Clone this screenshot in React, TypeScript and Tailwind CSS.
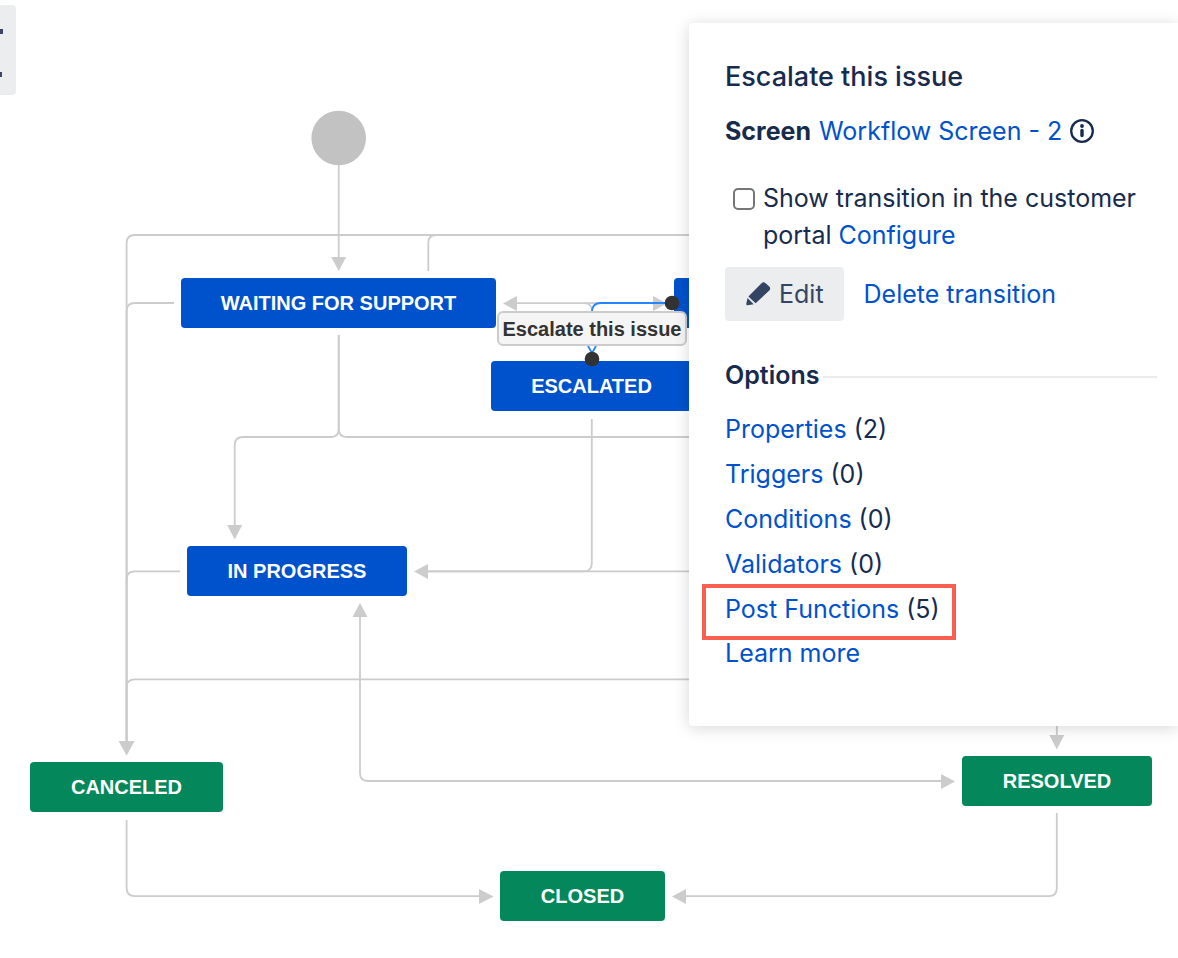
import { useState } from 'react';

type Node = { label: string; box: string };

const nodes: Node[] = [
  { label: 'WAITING FOR SUPPORT', box: 'left-[181px] top-[278px] w-[315px] bg-[#0052cc]' },
  { label: 'ESCALATED', box: 'left-[491px] top-[361px] w-[201px] bg-[#0052cc]' },
  { label: '', box: 'left-[674px] top-[278px] w-[300px] bg-[#0052cc]' },
  { label: 'IN PROGRESS', box: 'left-[187px] top-[546px] w-[220px] bg-[#0052cc]' },
  { label: 'CANCELED', box: 'left-[30px] top-[762px] w-[193px] bg-[#04875a]' },
  { label: 'RESOLVED', box: 'left-[962px] top-[756px] w-[190px] bg-[#04875a]' },
  { label: 'CLOSED', box: 'left-[500px] top-[871px] w-[165px] bg-[#04875a]' },
];

const edges = [
  'M338.700 165V258',
  'M720 235H135Q126.600 235 126.600 243V742',
  'M428.300 271V243Q428.300 235 436 235H720',
  'M174 303H135Q126.600 303 126.600 311V742',
  'M180 571.300H135Q126.600 571.300 126.600 579V742',
  'M720 679.300H135Q126.600 679.300 126.600 687V742',
  'M338.700 335V429Q338.700 437 331 437H243Q234.700 437 234.700 445V527',
  'M338.700 335V429Q338.700 437 347 437H720',
  'M591.800 419V563Q591.800 571.300 584 571.300H428',
  'M720 571.300H428',
  'M516 303.200H654',
  'M584 303.200Q592 303 592 311',
  'M360 616V773Q360 781 368 781H942',
  'M1056.800 700V736',
  'M126.600 820V888Q126.600 896.200 135 896.200H480',
  'M1056.800 813V888Q1056.800 896.200 1049 896.200H686',
];

const arrows = [
  'M331.200 257H346.200L338.700 271Z',
  'M227.200 525H242.200L234.700 539.500Z',
  'M118.600 741H134.600L126.600 755.800Z',
  'M352.500 617H367.500L360 603Z',
  'M428 564V579L414 571.500Z',
  'M517 296V311L503 303.500Z',
  'M653 296V311L667 303.500Z',
  'M941 774V789L955 781.500Z',
  'M1049.300 735H1064.300L1056.800 749.500Z',
  'M479 889V904L493.500 896.500Z',
  'M686 889V904L672 896.500Z',
];

const options = [
  { label: 'Properties', count: 2 },
  { label: 'Triggers', count: 0 },
  { label: 'Conditions', count: 0 },
  { label: 'Validators', count: 0 },
  { label: 'Post Functions', count: 5, marked: true },
];

function Diagram() {
  return (
    <div className="absolute inset-0 overflow-hidden font-['Liberation_Sans',Arial,sans-serif] text-xl font-bold">
      <svg className="absolute left-0 top-0" width="1178" height="958" aria-hidden="true">
        <circle cx="338.700" cy="138" r="27.300" fill="#c2c2c2" />
        <g fill="none" stroke="#cccccc" strokeWidth="1.800">
          {edges.map((d) => (
            <path key={d} d={d} />
          ))}
        </g>
        <g fill="#cccccc">
          {arrows.map((d) => (
            <path key={d} d={d} />
          ))}
        </g>
      </svg>
      {nodes.map((node) => (
        <div
          key={node.box}
          className={`absolute flex h-[50px] items-center justify-center rounded text-white ${node.box}`}
        >
          {node.label}
        </div>
      ))}
      <svg className="absolute left-0 top-0" width="1178" height="958" aria-hidden="true">
        <g fill="none" stroke="#2684ff" strokeWidth="1.800">
          <path d="M592 312Q592 303 601 303H672" />
          <path d="M588 346L592 353L596 346M592 352V359" />
        </g>
        <circle cx="672" cy="303" r="7.300" fill="#333333" />
        <circle cx="592" cy="359" r="7.300" fill="#333333" />
      </svg>
      <div className="absolute left-[497px] top-[311px] flex h-[35px] w-[190px] items-center justify-center whitespace-nowrap rounded-md border-2 border-[#cccccc] bg-[#f5f5f5] text-[#333333]">
        Escalate this issue
      </div>
    </div>
  );
}

function InfoIcon() {
  return (
    <svg width="24" height="24" viewBox="0 0 24 24" fill="none" aria-hidden="true">
      <circle cx="12" cy="12" r="10.800" stroke="currentColor" strokeWidth="2.300" />
      <circle cx="12" cy="7" r="1.900" fill="currentColor" />
      <path d="M12 11.500V16.500" stroke="currentColor" strokeWidth="3.400" strokeLinecap="round" />
    </svg>
  );
}

function PencilIcon() {
  return (
    <svg width="26" height="26" viewBox="0 0 26 26" fill="currentColor" aria-hidden="true">
      <path d="M3.400 14.400L16.300 1.500Q18.300 -0.600 20.600 1.200L24.300 4.600Q26.100 6.500 24.300 8.600L10.600 21.200Z" />
      <path d="M2.500 16L8.700 22.200L2.600 23.200Q1 23.300 1.300 21.700Z" />
    </svg>
  );
}

const link = 'text-[#0052cc] hover:underline';

function TransitionPanel() {
  const [shown, setShown] = useState(false);
  return (
    <aside className="absolute right-0 top-[23px] w-[489px] rounded-l bg-white pb-[51px] pl-9 pr-[21px] pt-9 shadow-[0_2px_16px_rgba(0,0,0,0.16)]">
      <h2 className="text-[27px] font-medium leading-9">Escalate this issue</h2>
      <p className="mt-[18px] flex items-center gap-2 leading-9">
        <strong className="font-bold">Screen</strong>
        <a href="#screen" className={link}>Workflow Screen - 2</a>
        <button type="button" aria-label="About screens">
          <InfoIcon />
        </button>
      </p>
      <div className="mt-[31px] flex items-start gap-2 pl-2 leading-[37px]">
        <input
          id="portal"
          type="checkbox"
          checked={shown}
          onChange={(e) => setShown(e.target.checked)}
          className="mt-2 size-[22px] shrink-0 appearance-none rounded-[5px] border-2 border-[#767676] bg-white checked:bg-[#0052cc]"
        />
        <label htmlFor="portal">
          Show transition in the customer portal{' '}
          <a href="#configure" className={link}>Configure</a>
        </label>
      </div>
      <div className="mt-[13px] flex items-center gap-5">
        <button type="button" className="flex h-[54px] items-center gap-2 rounded bg-[#ebedee] px-5 pt-0.5 text-[#344563]">
          <PencilIcon />
          Edit
        </button>
        <a href="#delete" className={`pt-0.5 ${link}`}>Delete transition</a>
      </div>
      <h3 className="mt-9 flex items-center gap-1 font-semibold leading-9">
        Options
        <span className="mt-1 h-0.5 flex-1 bg-[#ebecee]" />
      </h3>
      <ul className="mt-[14px] leading-[45px]">
        {options.map((option) => (
          <li key={option.label} className="relative">
            <a href="#option" className={link}>{option.label}</a> ({option.count})
            {option.marked && (
              <span className="pointer-events-none absolute -left-[23px] -top-[3px] h-14 w-[254px] border-4 border-[#f95f50]" />
            )}
          </li>
        ))}
        <li className="leading-[43px]">
          <a href="#learn" className={link}>Learn more</a>
        </li>
      </ul>
    </aside>
  );
}

export default function App() {
  return (
    <main className="relative min-h-screen overflow-hidden bg-white font-[Inter,sans-serif] text-[25px] text-[#172b4d]">
      <Diagram />
      <button type="button" aria-label="Toggle full screen" className="absolute left-0 top-[5px] h-[90px] w-4 rounded-r bg-[#ebedee]">
        <svg width="16" height="90" fill="#3c4468" aria-hidden="true">
          <path d="M0 24H3V29H0ZM0 67H2V72H0Z" />
        </svg>
      </button>
      <TransitionPanel />
    </main>
  );
}
